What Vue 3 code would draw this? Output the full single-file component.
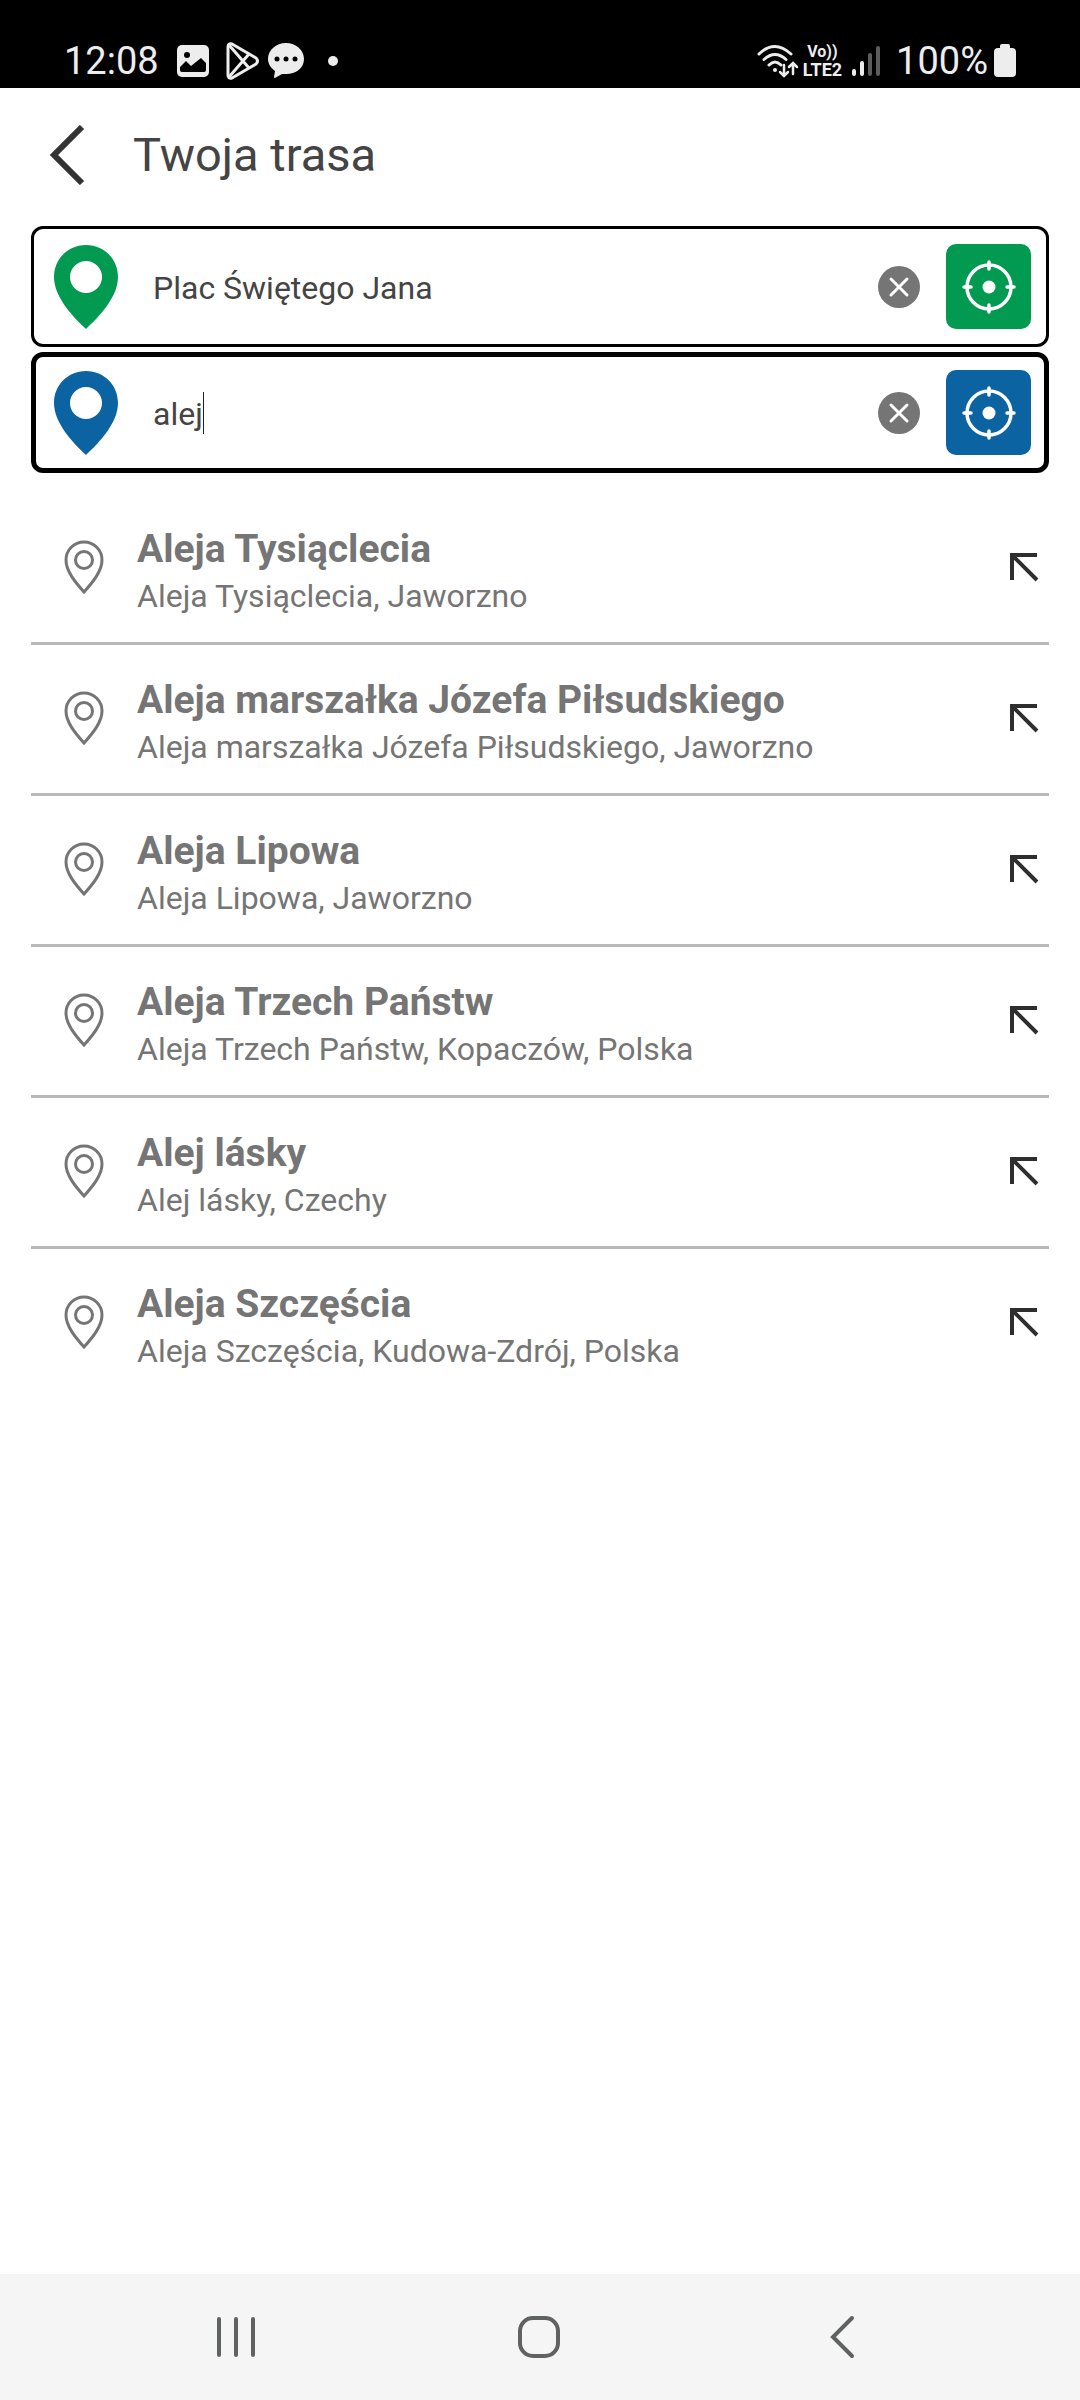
<script setup>
import { ref } from 'vue'

const stops = ref([
  { id: 'start', label: 'Punkt początkowy', value: 'Plac Świętego Jana', active: false },
  { id: 'end', label: 'Punkt docelowy', value: 'alej', active: true },
])

const suggestions = [
  { name: 'Aleja Tysiąclecia', address: 'Aleja Tysiąclecia, Jaworzno' },
  { name: 'Aleja marszałka Józefa Piłsudskiego', address: 'Aleja marszałka Józefa Piłsudskiego, Jaworzno' },
  { name: 'Aleja Lipowa', address: 'Aleja Lipowa, Jaworzno' },
  { name: 'Aleja Trzech Państw', address: 'Aleja Trzech Państw, Kopaczów, Polska' },
  { name: 'Alej lásky', address: 'Alej lásky, Czechy' },
  { name: 'Aleja Szczęścia', address: 'Aleja Szczęścia, Kudowa-Zdrój, Polska' },
]
</script>

<template>
  <div class="screen">
    <header class="status">
      <div class="status-group">
        <span class="status-text">12:08</span>
        <svg class="gallery" width="32" height="32" viewBox="0 0 32 32">
          <rect width="32" height="32" rx="5" fill="#ededed" />
          <circle cx="10" cy="10" r="3" fill="#000" />
          <path d="M3 22l6-6 5 5 10-8 5 5v7q0 2-2 2H5q-2 0-2-2z" fill="#000" />
        </svg>
        <svg class="play" width="34" height="38" viewBox="0 0 34 38" fill="none" stroke="#ededed" stroke-width="3" stroke-linejoin="round">
          <path d="M2 5q0-4 4-3l24 14q3 3 0 6L6 36q-4 1-4-3z" />
          <path d="M3 3l20 23M3 35l20-23" />
        </svg>
        <svg class="bubble" width="36" height="36" viewBox="0 0 36 36">
          <path d="M18 0c10 0 18 7 18 16s-8 15-18 15h-4l-7 4q-1 0-1-1l1-6C3 25 0 21 0 16 0 7 8 0 18 0z" fill="#ededed" />
          <g fill="#000"><circle cx="9" cy="16" r="2.5" /><circle cx="18" cy="16" r="2.5" /><circle cx="27" cy="16" r="2.5" /></g>
        </svg>
        <span class="dot"></span>
      </div>
      <div class="status-group">
        <svg width="42" height="34" viewBox="0 0 42 34" fill="none" stroke="#ededed" stroke-width="3" stroke-linecap="round">
          <path d="M2 10q15.500-15 32 0M7 15.500q11-10 22 0M12 21q6-6 12 0" />
          <circle cx="18" cy="26" r="2" fill="#ededed" stroke="none" />
          <path d="M27 21v10m-4-3l4 4 4-4M36 30V20m-4 3l4-4 4 4" stroke-width="2.500" />
        </svg>
        <span class="network"><span class="volte">Vo))</span><span>LTE2</span></span>
        <svg class="signal" width="29" height="32" viewBox="0 0 29 32">
          <g fill="#ededed"><rect x="0" y="24" width="4" height="7" rx="2" /><rect x="8" y="16" width="4" height="15" rx="2" /></g>
          <g fill="#5c5c5c"><rect x="16" y="8" width="4" height="23" rx="2" /><rect x="24" y="1" width="4" height="30" rx="2" /></g>
        </svg>
        <span class="status-text">100%</span>
        <svg class="battery" width="22" height="34" viewBox="0 0 22 34" fill="#ededed">
          <rect x="6" y="0" width="10" height="8" rx="2" /><rect y="4" width="22" height="29" rx="4" />
        </svg>
      </div>
    </header>

    <main class="content">
      <div class="title-bar">
        <button class="plain back" type="button" aria-label="Wstecz">
          <svg width="36" height="60" viewBox="0 0 36 60" fill="none" stroke="#333" stroke-width="6">
            <path d="M32 2L4 30l28 28" />
          </svg>
        </button>
        <h1>Twoja trasa</h1>
      </div>

      <form class="stops" @submit.prevent>
        <div v-for="stop in stops" :key="stop.id" class="stop" :class="[stop.id, { active: stop.active }]">
          <svg class="pin" width="64" height="84" viewBox="0 0 64 84" fill="currentColor" fill-rule="evenodd">
            <path d="M32 0c18 0 32 14 32 32 0 19-17 38-32 52C17 70 0 51 0 32 0 14 14 0 32 0zm0 16a16 16 0 1 0 0 32 16 16 0 0 0 0-32z" />
          </svg>
          <div class="entry">
            <input :id="stop.id" v-model="stop.value" type="text" :aria-label="stop.label" />
            <span v-if="stop.active" class="caret"></span>
          </div>
          <button class="plain clear" type="button" aria-label="Wyczyść" @click="stop.value = ''">
            <svg width="42" height="42" viewBox="0 0 42 42">
              <circle cx="21" cy="21" r="21" fill="#757575" />
              <path d="M13 13l16 16M29 13L13 29" stroke="#fff" stroke-width="3" stroke-linecap="round" />
            </svg>
          </button>
          <button class="plain locate" type="button" aria-label="Moja lokalizacja">
            <svg width="54" height="54" viewBox="0 0 54 54" fill="none" stroke="#fff" stroke-width="3.500" stroke-linecap="round">
              <circle cx="27" cy="27" r="22" />
              <circle cx="27" cy="27" r="6.500" fill="#fff" stroke="none" />
              <path d="M27 2v7M27 45v7M2 27h7M45 27h7" />
            </svg>
          </button>
        </div>
      </form>

      <ul class="results">
        <li v-for="place in suggestions" :key="place.name">
          <button class="plain result" type="button">
            <svg class="marker" width="40" height="54" viewBox="0 0 40 54" fill="none" stroke="#757575" stroke-width="3">
              <path d="M20 2c10 0 18 8 18 18 0 11-9 22-18 32C11 42 2 31 2 20 2 10 10 2 20 2z" />
              <circle cx="20" cy="20" r="8.500" />
            </svg>
            <span class="place">
              <strong>{{ place.name }}</strong>
              <span class="address">{{ place.address }}</span>
            </span>
            <svg width="30" height="30" viewBox="0 0 30 30" fill="none" stroke="#2e2e2e" stroke-width="4">
              <path d="M28 3H3v25M3 3l25 25" />
            </svg>
          </button>
        </li>
      </ul>
    </main>

    <nav class="system-nav">
      <button class="plain" type="button" aria-label="Ostatnie">
        <svg width="40" height="44" viewBox="0 0 40 44" stroke="#606261" stroke-width="4" stroke-linecap="round"><path d="M3 4v36M20 4v36M37 4v36" /></svg>
      </button>
      <button class="plain" type="button" aria-label="Ekran główny">
        <svg width="42" height="44" viewBox="0 0 42 44" fill="none" stroke="#606261" stroke-width="4"><rect x="2" y="3" width="38" height="38" rx="13" /></svg>
      </button>
      <button class="plain" type="button" aria-label="Wstecz">
        <svg width="26" height="44" viewBox="0 0 26 44" fill="none" stroke="#606261" stroke-width="4" stroke-linecap="round"><path d="M23 3L4 22l19 19" /></svg>
      </button>
    </nav>
  </div>
</template>

<style>
body {
  margin: 0;
}
</style>

<style scoped>
.screen {
  display: flex;
  flex-direction: column;
  min-height: 100vh;
  background: #fff;
  color: #444;
  font-family: Roboto, sans-serif;
}
svg {
  display: block;
  flex: none;
}
.plain {
  display: flex;
  align-items: center;
  justify-content: center;
  padding: 0;
  border: 0;
  background: none;
  font: inherit;
  color: inherit;
}
.status {
  display: flex;
  align-items: center;
  justify-content: space-between;
  height: 54px;
  padding: 34px 64px 0;
  background: #000;
  color: #ededed;
}
.status-group {
  display: flex;
  align-items: center;
}
.status-text {
  font-size: 38px;
  line-height: 48px;
}
.gallery {
  margin-left: 18px;
}
.play {
  margin-left: 17px;
}
.bubble {
  margin-left: 8px;
}
.dot {
  width: 10px;
  height: 10px;
  margin-left: 24px;
  border-radius: 50%;
  background: #ededed;
}
.network {
  display: flex;
  flex-direction: column;
  align-items: center;
  margin-left: 4px;
  font-size: 18px;
  font-weight: 700;
  line-height: 18px;
}
.volte {
  font-size: 16px;
}
.signal {
  margin: 0 15px 0 10px;
}
.battery {
  margin-left: 6px;
}
.content {
  flex: 1;
  padding: 0 31px;
}
.title-bar {
  display: flex;
  align-items: center;
  gap: 47px;
  height: 134px;
  padding: 0 0 4px 19px;
}
.title-bar h1 {
  margin: 0;
  font-size: 47px;
  font-weight: 400;
  line-height: 56px;
}
.stops {
  display: flex;
  flex-direction: column;
  gap: 5px;
  margin-bottom: 21px;
}
.stop {
  display: flex;
  align-items: center;
  box-sizing: border-box;
  height: 121px;
  padding: 0 15px 0 20px;
  border: 3px solid #000;
  border-radius: 12px;
}
.stop.active {
  padding: 0 13px 0 18px;
  border-width: 5px;
}
.start {
  --tone: #029a50;
}
.end {
  --tone: #0c63a2;
}
.pin {
  color: var(--tone);
}
.entry {
  display: flex;
  flex: 1;
  align-items: center;
  min-width: 0;
  margin: 0 24px 0 35px;
}
.entry input {
  field-sizing: content;
  max-width: 100%;
  padding: 2px 0 0;
  border: 0;
  outline: 0;
  background: none;
  color: #444;
  font-family: inherit;
  font-size: 32px;
  line-height: 40px;
}
.caret {
  width: 1px;
  height: 42px;
  background: #222;
}
.locate {
  width: 85px;
  height: 85px;
  margin-left: 26px;
  border-radius: 10px;
  background: var(--tone);
}
.results {
  margin: 0;
  padding: 0;
  list-style: none;
}
.results li {
  border-bottom: 3px solid #b9b9b9;
}
.results li:last-child {
  border-bottom: 0;
}
.result {
  width: 100%;
  height: 148px;
  padding: 0 10px 2px 33px;
  color: #757575;
  text-align: left;
}
.place {
  display: flex;
  flex: 1;
  flex-direction: column;
  min-width: 0;
  margin-left: 33px;
  padding-top: 8px;
}
.place strong {
  font-size: 39px;
  font-weight: 700;
  line-height: 50px;
}
.address {
  font-size: 32px;
  line-height: 44px;
}
.system-nav {
  display: flex;
  height: 126px;
  padding: 0 87px 0 85px;
  background: #f5f5f5;
}
.system-nav button {
  flex: 1;
}
</style>
